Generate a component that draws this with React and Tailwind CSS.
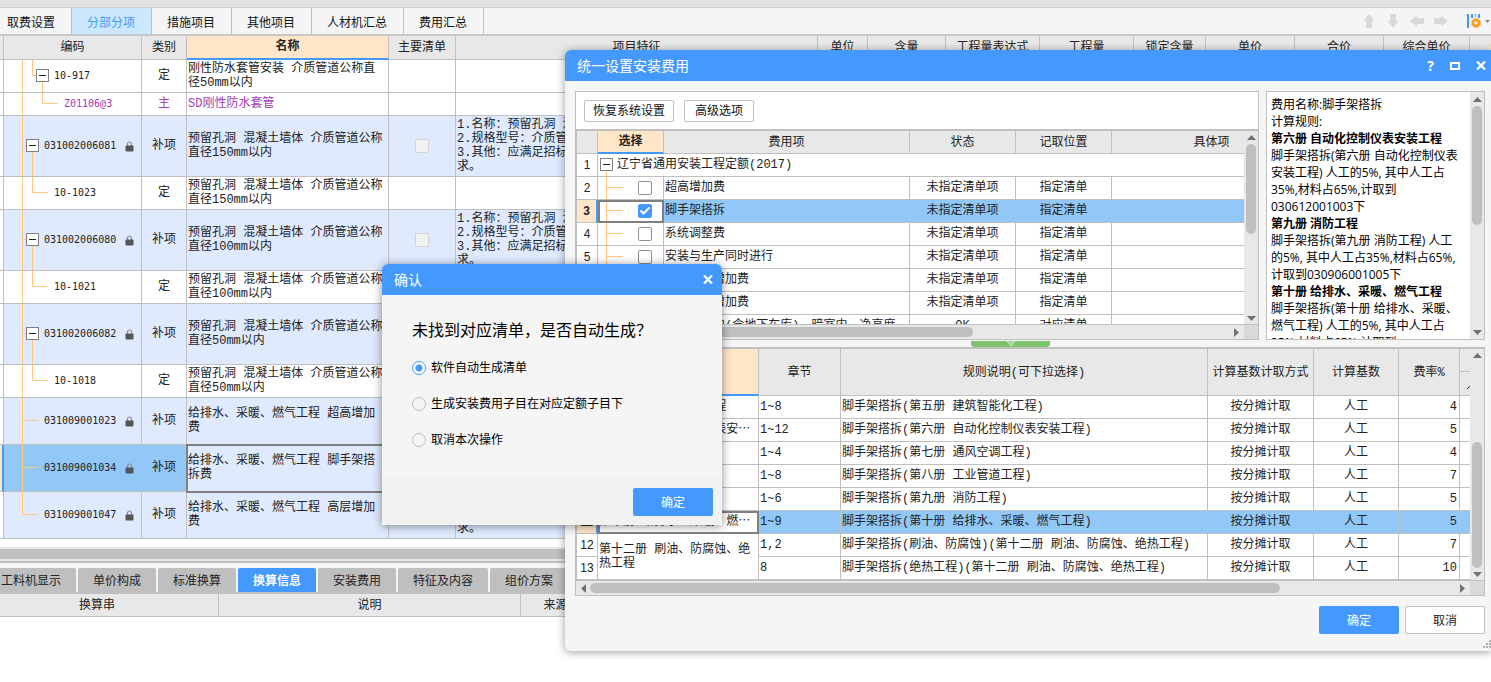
import React from 'react';
import { Check } from 'lucide-react';

const features = (lines) => lines.join('\n');

const pipeFeatures = features([
  '1.名称：预留孔洞 混凝土墙体',
  '2.规格型号：介质管道公称直径',
  '3.其他：应满足招标文件及规范要',
  '求。',
]);
const feeFeatures = features(['1.名称：给排水、采暖、燃气工程', '2.其他：应满足招标文件及规范要', '求。']);

const navTabs = ['分部分项', '措施项目', '其他项目', '人材机汇总', '费用汇总'];

const mainHeads = ['单位', '含量', '工程量表达式', '工程量', '锁定含量', '单价', '合价', '综合单价', '综合合价'];

// tree: shape of the connector drawn in front of the code
const items = [
  { code: '10-917', kind: '定', name: '刚性防水套管安装 介质管道公称直\n径50mm以内', tree: 'sub-open' },
  { code: 'Z01106@3', kind: '主', name: 'SD刚性防水套管', tree: 'sub-leaf', purple: true },
  { code: '031002006081', kind: '补项', name: '预留孔洞 混凝土墙体 介质管道公称\n直径150mm以内', tree: 'open', feature: pipeFeatures },
  { code: '10-1023', kind: '定', name: '预留孔洞 混凝土墙体 介质管道公称\n直径150mm以内', tree: 'child' },
  { code: '031002006080', kind: '补项', name: '预留孔洞 混凝土墙体 介质管道公称\n直径100mm以内', tree: 'open', feature: pipeFeatures },
  { code: '10-1021', kind: '定', name: '预留孔洞 混凝土墙体 介质管道公称\n直径100mm以内', tree: 'child' },
  { code: '031002006082', kind: '补项', name: '预留孔洞 混凝土墙体 介质管道公称\n直径50mm以内', tree: 'open', feature: pipeFeatures },
  { code: '10-1018', kind: '定', name: '预留孔洞 混凝土墙体 介质管道公称\n直径50mm以内', tree: 'child' },
  { code: '031009001023', kind: '补项', name: '给排水、采暖、燃气工程 超高增加\n费', tree: 'leaf', feature: feeFeatures },
  { code: '031009001034', kind: '补项', name: '给排水、采暖、燃气工程 脚手架搭\n拆费', tree: 'leaf', feature: feeFeatures, selected: true },
  { code: '031009001047', kind: '补项', name: '给排水、采暖、燃气工程 高层增加\n费', tree: 'last', feature: feeFeatures },
];

const treeShapes = {
  'sub-open': { h: 32, w: 50, lines: 'M18.5 0V32M28.5 0V15.5H32M38.5 22V32', box: [32, 9] },
  'sub-leaf': { h: 22, w: 60, lines: 'M18.5 0V22M38.5 0V10.5H54' },
  open: { h: 60, w: 40, lines: 'M18.5 0V60M18.5 29.5H22M28.5 36V60', box: [22, 23] },
  child: { h: 32, w: 50, lines: 'M18.5 0V32M28.5 0V15.5H44' },
  leaf: { h: 46, w: 40, lines: 'M18.5 0V46M18.5 22.5H34' },
  last: { h: 46, w: 40, lines: 'M18.5 0V22.5H34' },
};

const fees = [
  { name: '超高增加费' },
  { name: '脚手架搭拆', checked: true },
  { name: '系统调整费' },
  { name: '安装与生产同时进行' },
  { name: '有害环境增加费' },
  { name: '高层建筑增加费' },
  { name: '在地下室内(含地下车库)、暗室内、净高度', state: 'OK', place: '对应清单' },
];

const rules = [
  { no: 6, book: '第五册 建筑智能化工程', part: '1~8', text: '脚手架搭拆(第五册 建筑智能化工程)', rate: 4 },
  { no: 7, book: '第六册 自动化控制仪表安⋯', part: '1~12', text: '脚手架搭拆(第六册 自动化控制仪表安装工程)', rate: 5 },
  { no: 8, book: '第七册 通风空调工程', part: '1~4', text: '脚手架搭拆(第七册 通风空调工程)', rate: 4 },
  { no: 9, book: '第八册 工业管道工程', part: '1~8', text: '脚手架搭拆(第八册 工业管道工程)', rate: 7 },
  { no: 10, book: '第九册 消防工程', part: '1~6', text: '脚手架搭拆(第九册 消防工程)', rate: 5 },
  { no: 11, book: '第十册 给排水、采暖、燃⋯', part: '1~9', text: '脚手架搭拆(第十册 给排水、采暖、燃气工程)', rate: 5, selected: true },
  { no: 12, book: '第十二册 刷油、防腐蚀、绝\n热工程', span: 2, part: '1,2', text: '脚手架搭拆(刷油、防腐蚀)(第十二册 刷油、防腐蚀、绝热工程)', rate: 7 },
  { no: 13, part: '8', text: '脚手架搭拆(绝热工程)(第十二册 刷油、防腐蚀、绝热工程)', rate: 10 },
];

const notes = [
  ['费用名称:脚手架搭拆'],
  ['计算规则:'],
  ['第六册 自动化控制仪表安装工程', true],
  ['脚手架搭拆(第六册 自动化控制仪表'],
  ['安装工程) 人工的5%, 其中人工占'],
  ['35%,材料占65%,计取到'],
  ['030612001003下'],
  ['第九册 消防工程', true],
  ['脚手架搭拆(第九册 消防工程) 人工'],
  ['的5%, 其中人工占35%,材料占65%,'],
  ['计取到030906001005下'],
  ['第十册 给排水、采暖、燃气工程', true],
  ['脚手架搭拆(第十册 给排水、采暖、'],
  ['燃气工程) 人工的5%, 其中人工占'],
  ['35%,材料占65%,计取到'],
];

const grid = "font-['Liberation_Mono','Noto_Sans_CJK_SC',monospace] text-xs leading-[14px] text-[#222]";
const cell = 'border-r border-b border-[#c0c0c0] p-0';
const head = 'border-r border-b border-[#c0c0c0] bg-[#e8e8e8] p-0 pt-px text-center font-normal';

const TreeLines = ({ shape }) => {
  const { w, h, lines, box } = treeShapes[shape];
  return (
    <svg width={w} height={h} className="shrink-0" fill="none" aria-hidden="true">
      <path d={lines} stroke="#ffc880" />
      {box && (
        <g transform={`translate(${box[0]} ${box[1]})`}>
          <rect x="0.5" y="0.5" width="12" height="12" fill="#fff" stroke="#808080" />
          <path d="M3 6.5H10" stroke="#222" />
        </g>
      )}
    </svg>
  );
};

const Lock = () => (
  <svg width="9" height="11" viewBox="0 0 9 11" className="mr-[7px] ml-auto shrink-0" aria-hidden="true">
    <path d="M2.5 5V3a2 2 0 0 1 4 0V5" fill="none" stroke="#8c8c8c" strokeWidth="1.2" />
    <rect x="0.5" y="4.5" width="8" height="6" rx="0.8" fill="#555" />
  </svg>
);

const CloseMark = () => (
  <svg width="10" height="9" viewBox="0 0 10 9" aria-hidden="true">
    <path d="M1 0.5L9 8.5M9 0.5L1 8.5" stroke="#fff" strokeWidth="2.2" />
  </svg>
);

const Arrow = ({ dir }) => {
  const d = { up: 'M0 5L4.5 0L9 5Z', down: 'M0 0H9L4.5 5Z', left: 'M5 0V9L0 4.5Z', right: 'M0 0V9L5 4.5Z' }[dir];
  return (
    <svg width={dir === 'up' || dir === 'down' ? 9 : 5} height={dir === 'up' || dir === 'down' ? 5 : 9} className="shrink-0" aria-hidden="true">
      <path d={d} fill="#70707a" />
    </svg>
  );
};

const BlockArrow = ({ turn }) => (
  <svg width="16" height="16" viewBox="0 0 16 16" aria-hidden="true">
    <path d="M8 1L13.5 8H11V15H5V8H2.5Z" fill="#d9d9d9" transform={`rotate(${turn} 8 8)`} />
  </svg>
);

const CheckBox = ({ label, checked, disabled }) => (
  <label className="relative inline-flex h-[14px] w-[14px] shrink-0 items-center justify-center">
    <input
      type="checkbox"
      aria-label={label}
      defaultChecked={checked}
      disabled={disabled}
      className="peer h-[14px] w-[14px] appearance-none rounded-xs border border-[#909090] bg-white checked:border-[#4499ff] checked:bg-[#4499ff] disabled:border-[#d5d5d5] disabled:bg-[#f2f2f2]"
    />
    <Check size={12} strokeWidth={4} className="absolute hidden text-white peer-checked:block" />
  </label>
);

const MainTable = () => (
  <div className="overflow-hidden">
    <table className={`w-full min-w-[1560px] table-fixed border-separate border-spacing-0 ${grid}`}>
      <colgroup>
        <col className="w-[4px]" />
        <col className="w-[138px]" />
        <col className="w-[45px]" />
        <col className="w-[202px]" />
        <col className="w-[67px]" />
        <col className="w-[362px]" />
        <col className="w-[50px]" />
        <col className="w-[78px]" />
        <col className="w-[94px]" />
        <col className="w-[94px]" />
        <col className="w-[72px]" />
        <col className="w-[89px]" />
        <col className="w-[89px]" />
        <col className="w-[86px]" />
        <col />
      </colgroup>
      <thead>
        <tr className="h-6">
          <th className={head} />
          <th className={head}>编码</th>
          <th className={head}>类别</th>
          <th className="border-r border-b-2 border-r-[#c0c0c0] border-b-[#4499ff] bg-[#ffe6c8] p-0 text-center font-bold">名称</th>
          <th className={head}>主要清单</th>
          <th className={head}>项目特征</th>
          {mainHeads.map((h) => (
            <th key={h} className={`${head} whitespace-nowrap`}>{h}</th>
          ))}
        </tr>
      </thead>
      <tbody>
        {items.map((it) => {
          const bg = it.selected ? 'bg-[#91c8f7]' : it.feature ? 'bg-[#dfeafe]' : 'bg-white';
          const rest = it.feature ? 'bg-[#dfeafe]' : 'bg-white';
          return (
            <tr key={it.code} className={it.purple ? 'text-[#a53cb4]' : ''}>
              <td className={it.selected ? 'border-r-2 border-b border-r-[#4499ff] border-b-[#c0c0c0] bg-[#ffe6c8] p-0' : `${cell} bg-white`} />
              <td className={`${cell} ${bg}`}>
                <div className="flex items-center">
                  <TreeLines shape={it.tree} />
                  <span className="font-['DejaVu_Sans_Mono',monospace] text-[10px]">{it.code}</span>
                  {it.feature && <Lock />}
                </div>
              </td>
              <td className={`${cell} ${bg} text-center`}>{it.kind}</td>
              <td className={`${cell} ${rest} overflow-hidden pl-px whitespace-pre ${it.selected ? 'outline-2 -outline-offset-1 outline-[#808080]' : ''}`}>{it.name}</td>
              <td className={`${cell} ${rest} text-center`}>
                {it.feature && (
                  <div className="flex justify-center">
                    <CheckBox label={`主要清单 ${it.code}`} disabled />
                  </div>
                )}
              </td>
              <td className={`${cell} ${rest} overflow-hidden pl-px whitespace-pre`}>{it.feature}</td>
              {mainHeads.map((h) => (
                <td key={h} className={`${cell} ${rest}`} />
              ))}
            </tr>
          );
        })}
      </tbody>
    </table>
  </div>
);

const BottomTabs = () => {
  const tab = 'h-6 shrink-0 rounded-t-xs bg-[#bfbfbf] px-[15px] pt-[2px] text-[#222]';
  return (
    <nav className="flex gap-[2px] border-b-2 border-[#c0c0c0] bg-[#f5f5f5] pt-[5px]">
      <button className="h-6 shrink-0 rounded-tr-xs bg-[#bfbfbf] pt-[2px] pr-[15px] pl-px text-[#222]">工料机显示</button>
      <button className={tab}>单价构成</button>
      <button className={tab}>标准换算</button>
      <button className="h-6 shrink-0 rounded-t-xs bg-[#4499ff] px-[15px] pt-[2px] font-bold text-white">换算信息</button>
      <button className={tab}>安装费用</button>
      <button className={tab}>特征及内容</button>
      <button className={tab}>组价方案</button>
    </nav>
  );
};

const FeeTable = () => (
  <div className="h-[193px] min-w-0 flex-1 overflow-hidden">
    <table className={`w-[735px] table-fixed border-separate border-spacing-0 ${grid}`}>
      <colgroup>
        <col className="w-[21px]" />
        <col className="w-[66px]" />
        <col className="w-[246px]" />
        <col className="w-[106px]" />
        <col className="w-[96px]" />
        <col className="w-[200px]" />
      </colgroup>
      <thead>
        <tr className="h-[23px]">
          <th className={head} />
          <th className="border-r border-b-2 border-r-[#c0c0c0] border-b-[#4499ff] bg-[#ffe6c8] p-0 pt-px text-center font-bold">选择</th>
          <th className={head}>费用项</th>
          <th className={head}>状态</th>
          <th className={head}>记取位置</th>
          <th className={head}>具体项</th>
        </tr>
      </thead>
      <tbody>
        <tr className="bg-white">
          <td className={`${cell} text-center font-['Liberation_Sans',sans-serif]`}>1</td>
          <td colSpan={5} className={cell}>
            <div className="flex items-center">
              <svg width="19" height="22" fill="none" className="shrink-0" aria-hidden="true">
                <rect x="2.5" y="4.5" width="12" height="12" fill="#fff" stroke="#808080" />
                <path d="M5 10.5H12" stroke="#222" />
                <path d="M8.5 17V22" stroke="#ffc880" />
              </svg>
              辽宁省通用安装工程定额(2017)
            </div>
          </td>
        </tr>
        {fees.map((f, i) => {
          const bg = f.checked ? 'bg-[#91c8f7]' : 'bg-white';
          return (
            <tr key={f.name} className={bg}>
              <td className={`border-b border-b-[#c0c0c0] p-0 text-center font-['Liberation_Sans',sans-serif] ${f.checked ? 'border-r-2 border-r-[#4499ff] bg-[#ffe6c8] font-bold' : 'border-r border-r-[#c0c0c0] bg-white'}`}>{i + 2}</td>
              <td className={`${cell} bg-white ${f.checked ? 'outline-2 -outline-offset-2 outline-[#808080]' : ''}`}>
                <div className="flex items-center">
                  <svg width="40" height="22" fill="none" className="shrink-0" aria-hidden="true">
                    <path d="M8.5 0V22M8.5 10.5H25" stroke="#ffc880" />
                  </svg>
                  <CheckBox label={f.name} checked={f.checked} />
                </div>
              </td>
              <td className={`${cell} overflow-hidden pl-px whitespace-nowrap`}>{f.name}</td>
              <td className={`${cell} text-center`}>{f.state || '未指定清单项'}</td>
              <td className={`${cell} text-center`}>{f.place || '指定清单'}</td>
              <td className={cell} />
            </tr>
          );
        })}
      </tbody>
    </table>
  </div>
);

const RuleTable = () => (
  <div className="h-[231px] min-w-0 flex-1 overflow-hidden">
    <table className={`w-full table-fixed border-separate border-spacing-0 ${grid}`}>
      <colgroup>
        <col className="w-[21px]" />
        <col className="w-[161px]" />
        <col className="w-[82px]" />
        <col />
        <col className="w-[106px]" />
        <col className="w-[85px]" />
        <col className="w-[61px]" />
        <col className="w-[10px]" />
      </colgroup>
      <thead>
        <tr className="h-[47px]">
          <th className={head} />
          <th className="border-r border-b-2 border-r-[#c0c0c0] border-b-[#4499ff] bg-[#ffe6c8] p-0 text-center font-bold">分类</th>
          <th className={head}>章节</th>
          <th className={head}>规则说明(可下拉选择)</th>
          <th className={head}>计算基数计取方式</th>
          <th className={head}>计算基数</th>
          <th className={head}>费率%</th>
          <th className="border-b border-[#c0c0c0] bg-[#e8e8e8] p-0">
            <svg width="10" height="46" fill="none" className="block" aria-hidden="true">
              <path d="M0 22.5H10" stroke="#c0c0c0" />
              <path d="M7 40L10 37" stroke="#333" />
            </svg>
          </th>
        </tr>
      </thead>
      <tbody>
        {rules.map((r) => (
          <tr key={r.no} className={`h-[23px] ${r.selected ? 'bg-[#91c8f7]' : 'bg-white'}`}>
            <td className={`border-b border-b-[#c0c0c0] p-0 text-center font-['Liberation_Sans',sans-serif] ${r.selected ? 'border-r-2 border-r-[#4499ff] bg-[#ffe6c8] font-bold' : 'border-r border-r-[#c0c0c0]'}`}>{r.no}</td>
            {r.book && (
              <td
                rowSpan={r.span || 1}
                className={`${cell} overflow-hidden bg-white pl-px whitespace-pre ${r.selected ? 'outline-2 -outline-offset-2 outline-[#808080]' : ''}`}
              >
                {r.book}
              </td>
            )}
            <td className={`${cell} pl-px`}>{r.part}</td>
            <td className={`${cell} overflow-hidden pl-px whitespace-nowrap`}>{r.text}</td>
            <td className={`${cell} text-center`}>按分摊计取</td>
            <td className={`${cell} text-center`}>人工</td>
            <td className={`${cell} pr-[2px] text-right`}>{r.rate}</td>
            <td className="border-b border-[#c0c0c0] p-0" />
          </tr>
        ))}
      </tbody>
    </table>
  </div>
);

const FeeDialog = () => (
  <section
    role="dialog"
    aria-label="统一设置安装费用"
    className="absolute top-[50px] right-0 left-[565px] rounded-l-md bg-[#f5f5f5] pb-[17px] shadow-[0_1px_8px_rgba(0,0,0,0.4)]"
  >
    <header className="flex h-[31px] items-center rounded-tl-md bg-[#4499ff] pr-[5px] pl-3 text-white">
      <h2 className="text-sm">统一设置安装费用</h2>
      <div className="ml-auto flex items-center gap-4">
        <button aria-label="帮助" className="text-sm leading-4 font-bold">?</button>
        <button aria-label="最大化" className="h-2 w-[10px] border-2 border-white" />
        <button aria-label="关闭"><CloseMark /></button>
      </div>
    </header>

    <div className="flex gap-[7px] px-[10px] pt-[10px] pr-[6px]">
      <div className="min-w-0 flex-1 border border-[#c0c0c0] bg-white">
        <div className="flex h-[37px] gap-[10px] px-2 pt-2">
          <button className="h-[22px] w-[90px] rounded-xs border border-[#c0c0c0] bg-white">恢复系统设置</button>
          <button className="h-[22px] w-[70px] rounded-xs border border-[#c0c0c0] bg-white">高级选项</button>
        </div>
        <div className="flex border-t-2 border-l border-[#c0c0c0]">
          <FeeTable />
          <div className="flex w-[14px] flex-col items-center bg-[#e8e8e8] pt-1 pb-[3px]">
            <Arrow dir="up" />
            <div className="mt-1 h-[90px] w-[10px] rounded-full bg-[#bfbfbf]" />
            <div className="mt-auto"><Arrow dir="down" /></div>
          </div>
        </div>
        <div className="flex h-[15px] border-t border-[#c0c0c0] bg-[#e8e8e8]">
          <div className="flex flex-1 items-center gap-1 px-[5px]">
            <Arrow dir="left" />
            <div className="h-[10px] w-[383px] rounded-full bg-[#bfbfbf]" />
            <div className="ml-auto"><Arrow dir="right" /></div>
          </div>
          <div className="w-[14px] bg-[#d9d9d9]" />
        </div>
      </div>

      <div className="flex h-[249px] w-[219px] shrink-0 overflow-hidden border border-[#c0c0c0] bg-white">
        <div className="min-w-0 flex-1 pt-1 pl-1 whitespace-nowrap text-black">
          {notes.map(([text, bold], i) => (
            <p key={i} className={bold ? 'leading-[17px] font-bold' : 'leading-[17px]'}>{text}</p>
          ))}
        </div>
        <div className="flex w-[14px] flex-col items-center bg-[#e8e8e8] pt-[5px] pb-1">
          <Arrow dir="up" />
          <div className="mt-1 h-[119px] w-[10px] rounded-full bg-[#bfbfbf]" />
          <div className="mt-auto"><Arrow dir="down" /></div>
        </div>
      </div>
    </div>

    <div className="flex h-[7px] justify-center pr-[35px]">
      <svg width="79" height="7" aria-hidden="true">
        <path d="M0 1H79V5L77 7H2L0 5Z" fill="#7dc36b" />
        <path d="M36 1L40 6L44 1M38 1L40 3.5L42 1" fill="none" stroke="#d9f0d2" />
      </svg>
    </div>

    <div className="mr-[6px] ml-[10px] border border-[#c0c0c0] bg-[#e8e8e8]">
      <div className="flex border-t border-l border-[#c0c0c0]">
        <RuleTable />
        <div className="flex w-[14px] flex-col items-center pt-1 pb-[3px]">
          <Arrow dir="up" />
          <div className="mt-auto h-[126px] w-[10px] rounded-full bg-[#bfbfbf]" />
          <div className="mt-1"><Arrow dir="down" /></div>
        </div>
      </div>
      <div className="flex h-[15px] border-t border-[#c0c0c0]">
        <div className="flex flex-1 items-center gap-1 px-[5px]">
          <Arrow dir="left" />
          <div className="h-[10px] w-[78%] rounded-full bg-[#bfbfbf]" />
          <div className="ml-auto"><Arrow dir="right" /></div>
        </div>
        <div className="w-[14px] bg-[#d9d9d9]" />
      </div>
    </div>

    <footer className="flex justify-end gap-[6px] pt-[10px] pr-[6px]">
      <button className="h-7 w-20 rounded-xs bg-[#4499ff] pt-px text-white">确定</button>
      <button className="h-7 w-20 rounded-xs border border-[#c0c0c0] bg-white pt-px text-[#222]">取消</button>
    </footer>
    <svg width="8" height="8" className="absolute right-0 bottom-[3px]" fill="#b0b0b0" aria-hidden="true">
      <path d="M6 0h2v2h-2zM3 3h2v2h-2zM6 3h2v2h-2zM0 6h2v2h-2zM3 6h2v2h-2zM6 6h2v2h-2z" />
    </svg>
  </section>
);

const ConfirmDialog = () => (
  <section
    role="alertdialog"
    aria-label="确认"
    className="absolute top-[264px] left-[382px] w-[340px] rounded-t-md bg-[#f5f5f5] shadow-[0_1px_10px_rgba(0,0,0,0.45)]"
  >
    <header className="flex h-[31px] items-center justify-between rounded-t-md bg-[#4499ff] pr-[9px] pl-3 text-white">
      <h2 className="text-sm">确认</h2>
      <button aria-label="关闭"><CloseMark /></button>
    </header>
    <div className="px-[30px] pt-6 pb-7 font-['Liberation_Sans','Noto_Sans_CJK_SC',sans-serif] text-black">
      <p className="text-base">未找到对应清单，是否自动生成？</p>
      <div className="mt-[17px] flex flex-col gap-5">
        {['软件自动生成清单', '生成安装费用子目在对应定额子目下', '取消本次操作'].map((text, i) => (
          <label key={text} className="flex h-4 items-center gap-[5px]">
            <input
              type="radio"
              name="generate"
              defaultChecked={i === 0}
              className="h-[14px] w-[14px] appearance-none rounded-full border border-[#bdbdbd] bg-[#f5f5f5] checked:border-[#4499ff] checked:bg-[radial-gradient(circle,#4499ff_3px,#fff_4px)]"
            />
            {text}
          </label>
        ))}
      </div>
    </div>
    <footer className="flex justify-end bg-[#f2f2f2] pt-[12px] pr-[9px] pb-[9px]">
      <button className="h-7 w-20 rounded-xs bg-[#4499ff] pt-px text-white">确定</button>
    </footer>
  </section>
);

const App = () => {
  return (
    <div className="relative min-h-screen w-full overflow-hidden bg-white font-['Open_Sans','Noto_Sans_CJK_SC',sans-serif] text-xs text-[#111]">
      <div className="h-2 border-b border-[#cfcfcf] bg-[#e1e1e1]" />
      <nav className="flex h-7 items-stretch border-b-2 border-[#c8c8c8] bg-[#f5f5f5]">
        <button className="border-r border-[#c0c0c0] pt-[3px] pr-4 pl-[7px]">取费设置</button>
        {navTabs.map((t, i) => (
          <button key={t} className={`border-r border-[#c0c0c0] pt-[3px] pr-4 pl-[15px] ${i === 0 ? 'bg-[#cce8ff] text-[#4499ff]' : ''}`}>{t}</button>
        ))}
        <div className="ml-auto flex items-center gap-2 overflow-hidden">
          <BlockArrow turn={0} />
          <BlockArrow turn={180} />
          <BlockArrow turn={270} />
          <BlockArrow turn={90} />
          <svg width="24" height="16" viewBox="0 0 24 16" className="ml-[10px]" aria-hidden="true">
            <path d="M0 1H2V15H0ZM4 1H6V5H4ZM8 1H9V4H8ZM11 1H13V5H11Z" fill="#4499ff" />
            <circle cx="9" cy="10" r="3" fill="none" stroke="#ff9a1f" strokeWidth="2.4" />
            <circle cx="9" cy="10" r="4.2" fill="none" stroke="#ff9a1f" strokeWidth="1.4" strokeDasharray="2 1.3" />
            <path d="M18 7H23L20.5 10Z" fill="#888" />
          </svg>
        </div>
      </nav>

      <MainTable />

      <div className="mt-2 h-[14px] border-y-2 border-[#e8e8e8] bg-[#bfbfbf]" />
      <div className="h-[2px] bg-[#c0c0c0]" />
      <BottomTabs />
      <table className={`w-full table-fixed border-separate border-spacing-0 ${grid}`}>
        <colgroup>
          <col className="w-[219px]" />
          <col className="w-[302px]" />
          <col className="w-[70px]" />
          <col />
        </colgroup>
        <thead>
          <tr className="h-[23px]">
            <th className="border-r border-b border-[#c0c0c0] bg-[#e8e8e8] p-0 pt-px pr-6 text-center font-normal">换算串</th>
            <th className={head}>说明</th>
            <th className={head}>来源</th>
            <th className={head} />
          </tr>
        </thead>
      </table>

      <FeeDialog />
      <ConfirmDialog />
    </div>
  );
};

export default App;
